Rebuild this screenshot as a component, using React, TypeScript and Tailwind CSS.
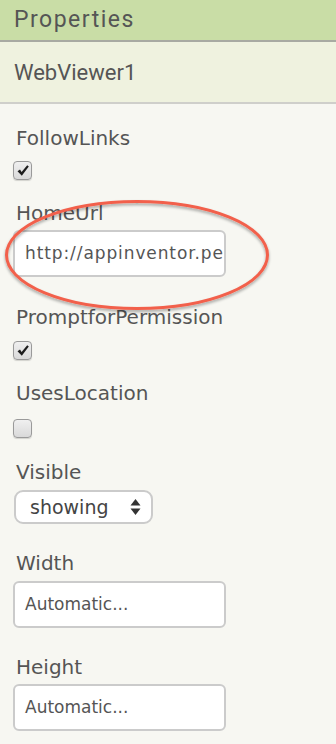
import React from "react";

const label = "text-[20px] leading-6 text-[#555] [font-family:'DejaVu_Sans',sans-serif]";

function Check({ checked }: { checked?: boolean }) {
  return (
    <div className="ml-[13px] flex h-[19px] w-[19px] items-center justify-center rounded-[4px] border border-[#9a9a9a] bg-[linear-gradient(180deg,#f0f0f0_0%,#d9d9d9_100%)] shadow-[0_1px_1px_rgba(0,0,0,0.15)]">
      {checked ? (
        <svg width="14" height="13" viewBox="0 0 14 13">
          <path
            d="M1.5 7.2 L4 5.6 L5.6 8 L11.2 1.2 L12.8 2.6 L5.8 11.8 Z"
            fill="#1d1d1d"
          />
        </svg>
      ) : null}
    </div>
  );
}

function TextBox({ value, wide }: { value: string; wide?: boolean }) {
  return (
    <div className="ml-[13px] flex h-[47px] w-[213px] items-center overflow-hidden rounded-[6px] border-2 border-[#cbcbcb] bg-white pl-[10px] pr-[12px]">
      <span
        className={
          "whitespace-nowrap text-[#555] [font-family:'DejaVu_Sans',sans-serif] " +
          (wide ? "text-[17px] tracking-[0.9px]" : "text-[17px]")
        }
      >
        {value}
      </span>
    </div>
  );
}

export default function App() {
  return (
    <div className="relative h-[744px] w-[336px] overflow-hidden bg-[#f7f7f2]">
      <div className="flex h-[42px] items-center border-b-2 border-[#a8aaa2] bg-[#c9dda6] pl-[14px]">
        <span className="text-[23px] font-normal tracking-[1.5px] text-[#555] [font-family:Roboto,sans-serif]">
          Properties
        </span>
      </div>
      <div className="flex h-[62px] items-center border-b-2 border-[#cfcfcb] bg-[#eff2df] pl-[14px]">
        <span className="text-[22px] text-[#555] [font-family:Roboto,sans-serif]">
          WebViewer1
        </span>
      </div>

      <div className="pt-[22px]">
        <div className={label + " pl-4"}>FollowLinks</div>
        <div className="mt-[11px]">
          <Check checked />
        </div>

        <div className={label + " mt-[21px] pl-4"}>HomeUrl</div>
        <div className="mt-[5px]">
          <TextBox value="http://appinventor.pe" wide />
        </div>

        <div className={label + " mt-[28px] pl-4"}>PromptforPermission</div>
        <div className="mt-[12px]">
          <Check checked />
        </div>

        <div className={label + " mt-[21px] pl-4"}>UsesLocation</div>
        <div className="mt-[14px]">
          <Check />
        </div>

        <div className={label + " mt-[22px] pl-4"}>Visible</div>
        <div className="mt-[6px] ml-[14px] flex h-[34px] w-[139px] items-center justify-between rounded-[9px] border-2 border-[#cbcbcb] bg-white pl-[14px] pr-[10px]">
          <span className="text-[19px] text-[#444] [font-family:'DejaVu_Sans',sans-serif]">
            showing
          </span>
          <svg width="11" height="18" viewBox="0 0 11 18">
            <path d="M5.5 1 L10.5 7.5 L0.5 7.5 Z" fill="#333" />
            <path d="M0.5 10.5 L10.5 10.5 L5.5 17 Z" fill="#333" />
          </svg>
        </div>

        <div className={label + " mt-[27px] pl-4"}>Width</div>
        <div className="mt-[6px]">
          <TextBox value="Automatic..." />
        </div>

        <div className={label + " mt-[27px] pl-4"}>Height</div>
        <div className="mt-[5px]">
          <TextBox value="Automatic..." />
        </div>
      </div>

      <svg
        className="pointer-events-none absolute left-0 top-[190px]"
        width="336"
        height="130"
        viewBox="0 0 336 130"
      >
        <defs>
          <filter id="sh" x="-10%" y="-20%" width="120%" height="140%">
            <feGaussianBlur in="SourceAlpha" stdDeviation="1.5" />
            <feOffset dx="0" dy="1.5" result="b" />
            <feComponentTransfer>
              <feFuncA type="linear" slope="0.35" />
            </feComponentTransfer>
            <feMerge>
              <feMergeNode />
              <feMergeNode in="SourceGraphic" />
            </feMerge>
          </filter>
        </defs>
        <ellipse
          cx="137"
          cy="65"
          rx="130.5"
          ry="53.5"
          fill="none"
          stroke="#f2604c"
          strokeWidth="3"
          filter="url(#sh)"
        />
      </svg>
    </div>
  );
}
